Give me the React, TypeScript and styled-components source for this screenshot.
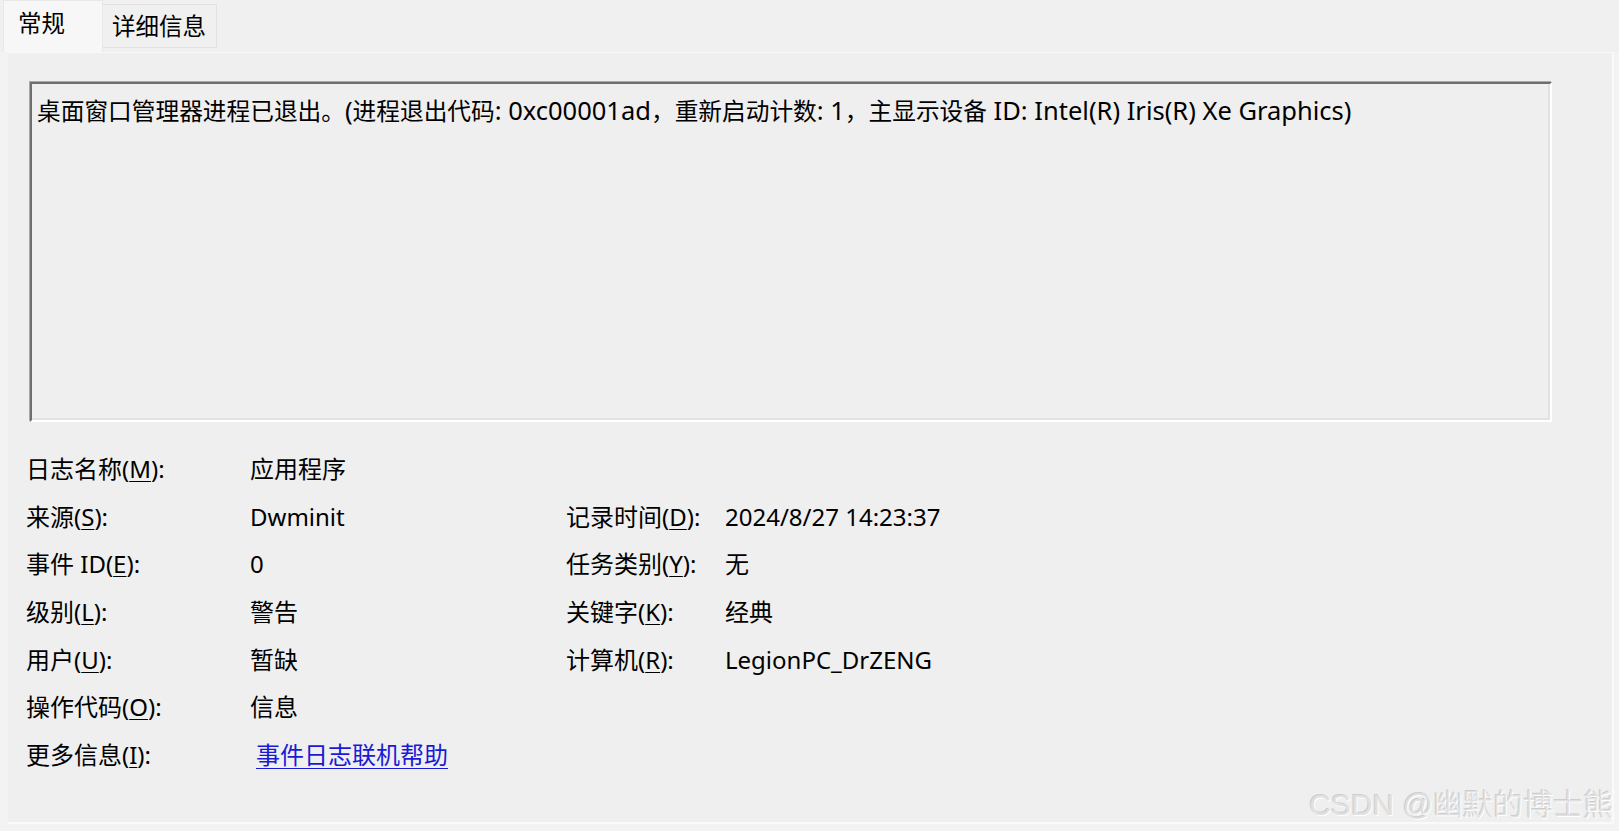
import React from "react";
import styled, { createGlobalStyle } from "styled-components";

const FONT = `"Noto Sans", "Noto Sans CJK SC", sans-serif`;

const GlobalStyle = createGlobalStyle`
  html, body {
    margin: 0;
    padding: 0;
    background: #f3f3f3;
  }
  body {
    font-family: ${FONT};
    color: #000;
  }
`;

const Window = styled.div`
  position: relative;
  width: 1619px;
  height: 831px;
  background: #f3f3f3;
  overflow: hidden;
  font-family: ${FONT};
`;

const TabBar = styled.div`
  display: flex;
  align-items: flex-start;
  height: 52px;
  padding-left: 3px;
  background: #f0f0f0;
`;

const Tab = styled.div<{ $active?: boolean }>`
  box-sizing: border-box;
  display: flex;
  align-items: center;
  font-family: "Noto Sans CJK SC", sans-serif;
  font-size: 23.5px;
  line-height: 1;
  color: #000;
  height: ${(p) => (p.$active ? "52px" : "44px")};
  margin-top: ${(p) => (p.$active ? "0" : "4px")};
  width: ${(p) => (p.$active ? "100px" : "114px")};
  padding-left: ${(p) => (p.$active ? "14px" : "9px")};
  padding-bottom: ${(p) => (p.$active ? "8px" : "0")};
  background: ${(p) => (p.$active ? "#f7f7f7" : "#f0f0f0")};
  border: 1px solid ${(p) => (p.$active ? "#e8e8e8" : "#e2e2e2")};
  border-bottom: ${(p) => (p.$active ? "none" : "1px solid #e2e2e2")};
  border-left: ${(p) => (p.$active ? "1px solid #e8e8e8" : "none")};
`;

const Panel = styled.div`
  box-sizing: border-box;
  margin-left: 8px;
  width: 1606px;
  height: 772px;
  background: #efefef;
  border-top: 1px solid #f9f9f9;
  border-right: 2px solid #fafafa;
  border-bottom: 2px solid #fafafa;
  padding: 29px 0 0 22px;
`;

const MessageBox = styled.div`
  box-sizing: border-box;
  width: 1522px;
  height: 340px;
  background: #efefef;
  border-top: 2px solid #6f6f6f;
  border-left: 2px solid #6f6f6f;
  border-right: 2px solid #ffffff;
  border-bottom: 2px solid #ffffff;
  box-shadow: inset -2px -2px 0 #e2e2e2, -1px -1px 0 #a9a9a9;
  padding: 10px 5px;
  font-size: 25.5px;
  line-height: 32px;
  white-space: pre-wrap;
`;

const Cjk = styled.span<{ $size: number }>`
  font-family: "Noto Sans CJK SC", sans-serif;
  font-size: ${(p) => p.$size}px;
`;

const Fields = styled.div`
  display: grid;
  grid-template-columns: 224px 316px 159px 1fr;
  grid-auto-rows: 47.7px;
  align-items: center;
  margin-top: 23px;
  margin-left: -4px;
  font-size: 24px;
`;

const Label = styled.div`
  white-space: nowrap;
  line-height: 1;
`;

const Value = styled.div<{ $indent?: number }>`
  white-space: nowrap;
  line-height: 1;
  padding-left: ${(p) => p.$indent ?? 0}px;
`;

const Key = styled.span`
  text-decoration: underline;
  text-underline-offset: 3px;
  text-decoration-thickness: 1px;
`;

const Link = styled.a`
  color: #1a1ad6;
  text-decoration: underline;
  text-underline-offset: 4px;
  text-decoration-thickness: 1px;
  cursor: pointer;
`;

const Watermark = styled.div`
  position: absolute;
  right: 6px;
  bottom: 11px;
  font-family: "Liberation Sans", "Noto Sans CJK SC", sans-serif;
  font-size: 30px;
  font-weight: 300;
  line-height: 1;
  color: #e0e0e0;
  text-shadow: 1px 1px 0 #ffffff, -1px -1px 0 #cdcdcd;
  white-space: nowrap;
  pointer-events: none;
`;

const CJK_RE = /([\u2E80-\u9FFF\u3000-\u303F\uFF00-\uFFEF]+)/;

const Mixed: React.FC<{ text: string; cjkSize: number }> = ({ text, cjkSize }) => (
  <>
    {text.split(CJK_RE).map((part, i) =>
      part === "" ? null : CJK_RE.test(part) ? (
        <Cjk key={i} $size={cjkSize}>
          {part}
        </Cjk>
      ) : (
        <React.Fragment key={i}>{part}</React.Fragment>
      )
    )}
  </>
);

type Row = {
  label: string;
  key: string;
  value?: React.ReactNode;
  label2?: string;
  key2?: string;
  value2?: string;
};

const rows: Row[] = [
  { label: "日志名称", key: "M", value: "应用程序" },
  { label: "来源", key: "S", value: "Dwminit", label2: "记录时间", key2: "D", value2: "2024/8/27 14:23:37" },
  { label: "事件 ID", key: "E", value: "0", label2: "任务类别", key2: "Y", value2: "无" },
  { label: "级别", key: "L", value: "警告", label2: "关键字", key2: "K", value2: "经典" },
  { label: "用户", key: "U", value: "暂缺", label2: "计算机", key2: "R", value2: "LegionPC_DrZENG" },
  { label: "操作代码", key: "O", value: "信息" },
  { label: "更多信息", key: "I", value: <Link>事件日志联机帮助</Link> },
];

const FieldLabel: React.FC<{ text: string; k: string }> = ({ text, k }) => (
  <Label>
    {text}(<Key>{k}</Key>):
  </Label>
);

const MESSAGE =
  "桌面窗口管理器进程已退出。(进程退出代码: 0xc00001ad，重新启动计数: 1，主显示设备 ID: Intel(R) Iris(R) Xe Graphics)";

export default function App() {
  return (
    <>
      <GlobalStyle />
      <Window>
        <TabBar>
          <Tab $active>常规</Tab>
          <Tab>详细信息</Tab>
        </TabBar>
        <Panel>
          <MessageBox>
            <Mixed text={MESSAGE} cjkSize={23.7} />
          </MessageBox>
          <Fields>
            {rows.map((r, i) => (
              <React.Fragment key={i}>
                <FieldLabel text={r.label} k={r.key} />
                <Value $indent={i === 6 ? 6 : 0}>{r.value}</Value>
                {r.label2 ? <FieldLabel text={r.label2} k={r.key2 as string} /> : <div />}
                <Value>{r.value2 ?? ""}</Value>
              </React.Fragment>
            ))}
          </Fields>
        </Panel>
        <Watermark>CSDN @幽默的博士熊</Watermark>
      </Window>
    </>
  );
}
